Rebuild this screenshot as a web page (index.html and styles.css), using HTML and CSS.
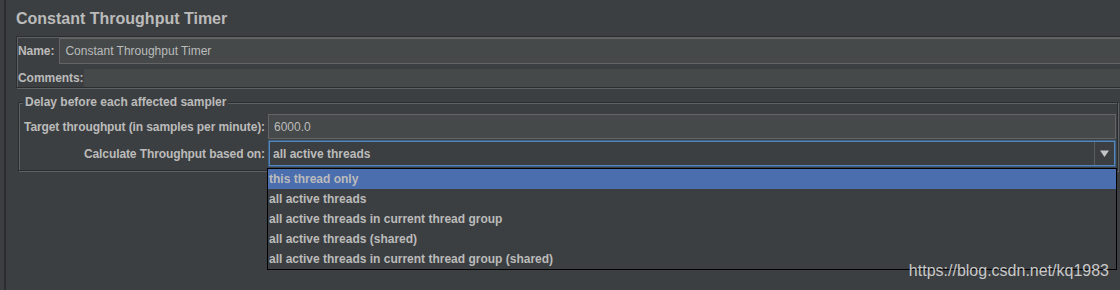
FILE: index.html
```html
<!DOCTYPE html>
<html>
<head>
<meta charset="utf-8">
<link rel="stylesheet" href="styles.css">
</head>
<body>
<div class="window">
  <div class="main">
    <div class="title">Constant Throughput Timer</div>
    <div class="name-panel">
      <div class="row name-row">
        <label class="lbl name-lbl">Name:</label>
        <div class="textfield">Constant Throughput Timer</div>
      </div>
      <div class="row comments-row">
        <label class="lbl">Comments:</label>
        <div class="textarea"></div>
      </div>
    </div>
    <fieldset class="group">
      <legend class="group-title">Delay before each affected sampler</legend>
      <div class="form-grid">
        <label class="lbl right">Target throughput (in samples per minute):</label>
        <div class="textfield tf-throughput">6000.0</div>
        <label class="lbl right">Calculate Throughput based on:</label>
        <div class="combo">
          <span class="combo-value">all active threads</span>
          <span class="combo-btn">
            <svg width="9" height="7" viewBox="0 0 9 7"><path d="M0 0.5 H9 L4.5 7 Z" fill="#c4c4c4"/></svg>
          </span>
          <ul class="popup">
            <li class="item selected">this thread only</li>
            <li class="item">all active threads</li>
            <li class="item">all active threads in current thread group</li>
            <li class="item">all active threads (shared)</li>
            <li class="item">all active threads in current thread group (shared)</li>
          </ul>
        </div>
      </div>
    </fieldset>
  </div>
  <div class="watermark">https://blog.csdn.net/kq1983</div>
</div>
</body>
</html>
```
FILE: styles.css
```css
html, body {
  margin: 0;
  padding: 0;
  height: 290px;
  overflow: hidden;
  background: #3c3f41;
}
body {
  font-family: "Liberation Sans", Arial, sans-serif;
  font-size: 12px;
  color: #bbbbbb;
}
.window {
  position: relative;
  height: 290px;
  margin-left: 4px;
  border-left: 2px solid #2b2d2f;
  padding-left: 10px;
  box-sizing: border-box;
}
.main {
  display: flex;
  flex-direction: column;
}
.title {
  font-weight: bold;
  font-size: 16px;
  line-height: 18px;
  padding-top: 10px;
  height: 26px;
}
.name-panel {
  border: 1px solid #2b2d2e;
  box-shadow: inset 1px 1px 0 #5e6163, 1px 1px 0 #5e6163;
  padding: 1px 0 0 1px;
  margin-right: -6px;
}
.row {
  display: flex;
  align-items: center;
}
.lbl {
  font-weight: bold;
  white-space: nowrap;
  letter-spacing: -0.05px;
}
.name-row {
  height: 26px;
}
.name-lbl {
  margin-right: 5px;
}
.textfield {
  flex: 1;
  box-sizing: border-box;
  height: 100%;
  background: #45494a;
  border: 1px solid #646464;
  padding-left: 5px;
  display: flex;
  align-items: center;
}
.comments-row {
  margin-top: 5px;
  height: 18px;
}
.textarea {
  flex: 1;
  height: 100%;
  background: #45494a;
}
.group {
  margin: 7px 2px 0 2px;
  border: 1px solid #2b2d2e;
  box-shadow: inset 1px 1px 0 #5e6163, 1px 1px 0 #5e6163;
  padding: 5px 1px 3px 4px;
  min-width: 0;
}
.group-title {
  font-weight: bold;
  line-height: 14px;
  padding: 0 2px;
  background: #3c3f41;
}
.form-grid {
  display: grid;
  grid-template-columns: 242px 1fr;
  grid-template-rows: 25px 27px;
  column-gap: 3px;
  row-gap: 1px;
  align-items: center;
}
.right {
  text-align: right;
  letter-spacing: -0.1px;
}
.tf-throughput {
  height: 25px;
}
.combo {
  position: relative;
  height: 27px;
  box-sizing: border-box;
  border: 1px solid #3d6185;
  box-shadow: inset 0 0 0 1px #5486bd;
  background: #3c3f41;
  display: flex;
  align-items: center;
}
.combo-value {
  flex: 1;
  font-weight: bold;
  padding-left: 4px;
}
.combo-btn {
  width: 19px;
  height: 23px;
  border-left: 1px solid #5a5d5f;
  margin-right: 1px;
  display: flex;
  align-items: center;
  justify-content: center;
}
.popup {
  position: absolute;
  left: -2px;
  right: -2px;
  top: calc(100% + 2px);
  margin: 0;
  padding: 0;
  list-style: none;
  border: 1px solid #000000;
  background: #3c3f41;
  z-index: 2;
}
.item {
  height: 20px;
  line-height: 20px;
  padding-left: 1px;
  font-weight: bold;
  white-space: nowrap;
}
.item.selected {
  background: #4b6eaf;
}
.watermark {
  position: absolute;
  right: 11px;
  top: 262px;
  font-family: "Liberation Sans", Arial, sans-serif;
  font-size: 16px;
  line-height: 18px;
  color: #c8c8c8;
  z-index: 3;
}
```
